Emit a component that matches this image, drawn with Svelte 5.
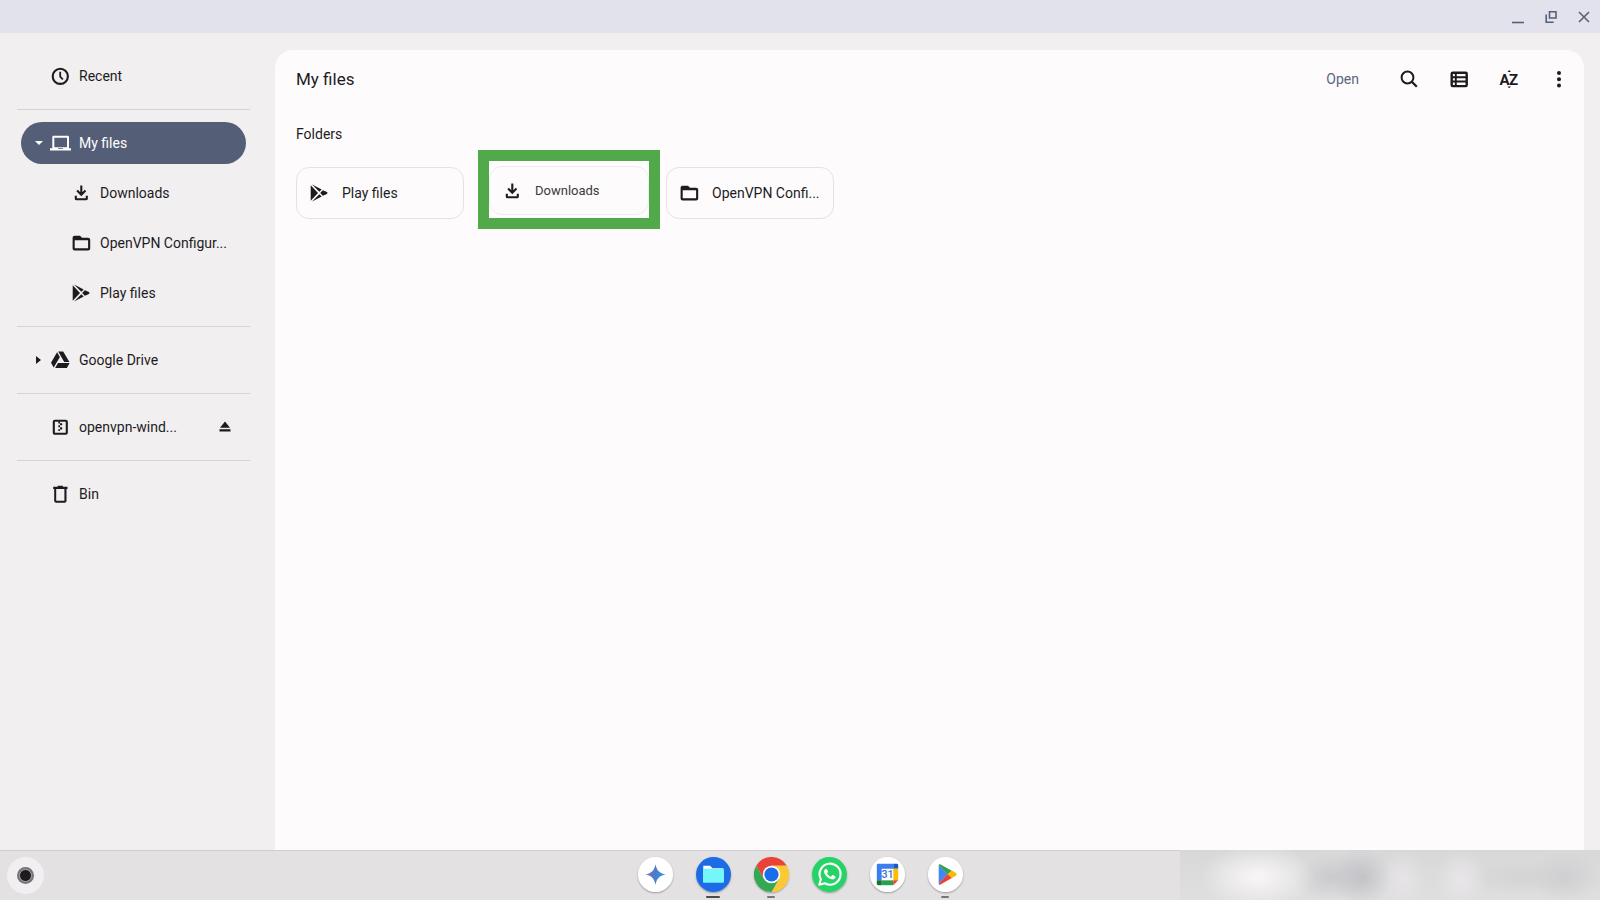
<script>
  const groups = [
    [{ label: 'Recent', icon: 'clock' }],
    [
      { label: 'My files', icon: 'laptop', arrow: 'down', selected: true },
      { label: 'Downloads', icon: 'download', child: true },
      { label: 'OpenVPN Configur...', icon: 'folder', child: true },
      { label: 'Play files', icon: 'play', child: true }
    ],
    [{ label: 'Google Drive', icon: 'drive', arrow: 'right' }],
    [{ label: 'openvpn-wind...', icon: 'archive', eject: true }],
    [{ label: 'Bin', icon: 'bin' }]
  ];
  const apps = [
    { name: 'Gemini', id: 'gemini' },
    { name: 'Files', id: 'files', state: 'active' },
    { name: 'Chrome', id: 'chrome', state: 'running' },
    { name: 'WhatsApp', id: 'whatsapp' },
    { name: 'Calendar', id: 'calendar' },
    { name: 'Play Store', id: 'store', state: 'running' }
  ];
</script>

{#snippet icon(name)}
  <svg class="icon" viewBox="0 0 20 20" width="20" height="20" aria-hidden="true">
    {#if name === 'clock'}
      <circle cx="10.300" cy="10.300" r="7.600" fill="none" stroke="currentColor" stroke-width="2.100" />
      <path d="M10.200 5.800v4.800l2.700 2.900" fill="none" stroke="currentColor" stroke-width="1.800" />
    {:else if name === 'laptop'}
      <path fill="currentColor" fill-rule="evenodd" d="M3.500 2.700h14.300c.7 0 1.200.5 1.200 1.200V15.300h2v2.200H0v-2.200h2.300V3.900c0-.7.5-1.200 1.200-1.200zM4.300 4.700v9.600H17V4.700zM8 15.300v.8h5v-.8z" />
    {:else if name === 'download'}
      <path d="M10.300 2.500v9M6.100 7.600l4.200 4.100 4.200-4.100M4.800 12.800v2.600c0 .5.300.900.800.900h9.400c.5 0 .8-.4.800-.9v-2.600" fill="none" stroke="currentColor" stroke-width="2.100" />
    {:else if name === 'folder'}
      <path fill="currentColor" fill-rule="evenodd" d="M3.600 2.800H9l2 2h6.200c1.100 0 2 .9 2 2v8.700c0 1.100-.9 2-2 2H3.600c-1.100 0-2-.9-2-2V4.800c0-1.100.9-2 2-2zM3.700 7.200v8.100h13.400V7.200z" />
    {:else if name === 'play'}
      <path fill="currentColor" d="M1.700 2.300v15.400L9 10zM3.100 1.600l7.200 7.200 2.400-2.300zM3.100 18.400l7.200-7.200 2.400 2.300z" />
      <path fill="currentColor" d="m13.800 7.200 3.600 1.600c1.500.7 1.500 1.700 0 2.400l-3.600 1.600L11.200 10z" />
    {:else if name === 'drive'}
      <path fill="currentColor" d="M7.100 2.200 1 12.700l2.700 4.900L9.900 6.900zM8.200 1.500h5l6.200 10.600h-5.200zM8 12.900h11.600l-2.700 5H5.100z" />
    {:else if name === 'archive'}
      <rect x="3.800" y="3.700" width="13" height="13" rx="1" fill="none" stroke="currentColor" stroke-width="2.100" />
      <path fill="currentColor" d="M8.300 4.500H10v2H8.300zM10 6.300h2.200v2H10zM8.300 8.300H10v2H8.300zM10 10.300h2.200v2.200H10zM8.300 12.200H10V14H8.300z" />
    {:else if name === 'bin'}
      <path fill="currentColor" fill-rule="evenodd" d="M7.700 1.800h5.200v1h4.600V5h-1v11.800c0 1.100-.9 2-2 2H6.200c-1.100 0-2-.9-2-2V5h-1V2.800h4.500zM6.200 5v11.700h8.200V5z" />
    {:else if name === 'search'}
      <circle cx="8.500" cy="8.500" r="5.900" fill="none" stroke="currentColor" stroke-width="2" />
      <path d="m12.800 12.800 5 5" stroke="currentColor" stroke-width="2.300" />
    {:else if name === 'list'}
      <rect x="2.700" y="3.700" width="15" height="13.400" rx="1" fill="none" stroke="currentColor" stroke-width="2.400" />
      <path d="M2 8.200h16M2 12.600h16" stroke="currentColor" stroke-width="2" />
      <path d="M6.800 3v14" stroke="currentColor" stroke-width="1.900" />
    {:else if name === 'sort'}
      <text x="0.500" y="15.700" class="sort-text">A</text>
      <text x="9.900" y="15.700" class="sort-text">Z</text>
      <path fill="currentColor" d="M8.500 2.900 10.200 1.100l1.700 1.800zM8.500 17.400l1.700 1.800 1.700-1.800z" />
    {:else if name === 'more'}
      <circle cx="10" cy="4" r="2" fill="currentColor" />
      <circle cx="10" cy="10.300" r="2" fill="currentColor" />
      <circle cx="10" cy="16.600" r="2" fill="currentColor" />
    {/if}
  </svg>
{/snippet}

{#snippet appIcon(id)}
  <svg viewBox="0 0 36 36" aria-hidden="true">
    {#if id === 'gemini'}
      <defs>
        <linearGradient id="spark" x1="0" x2="1" y1="0.400" y2="0.600">
          <stop offset="0" stop-color="#8a72bd" /><stop offset="0.450" stop-color="#4c7bc8" /><stop offset="1" stop-color="#2b9ae8" />
        </linearGradient>
      </defs>
      <circle cx="18" cy="18" r="18" fill="#fff" />
      <path fill="url(#spark)" d="M18 7.500C19.300 14 22 16.700 28.500 18 22 19.300 19.300 22 18 28.500 16.700 22 14 19.300 7.500 18 14 16.700 16.700 14 18 7.500z" />
    {:else if id === 'files'}
      <circle cx="18" cy="18" r="18" fill="#1b6ce5" />
      <path fill="#fff" d="M7.500 9h7l2.500 2.500h11V20H7.500z" />
      <path fill="#75f7fa" d="M7.500 12h20c.8 0 1.300.5 1.300 1.300v12c0 .8-.5 1.300-1.300 1.300h-19c-.8 0-1.300-.5-1.300-1.300v-13z" />
    {:else if id === 'chrome'}
      <path fill="#ea4335" d="M2.400 9A18 18 0 0 1 33.600 9H18L10.200 22.500z" />
      <path fill="#fbc934" d="M33.600 9A18 18 0 0 1 18 36l7.800-13.500L18 9z" />
      <path fill="#34a853" d="M18 36A18 18 0 0 1 2.400 9l7.800 13.500h15.600z" />
      <circle cx="18" cy="18" r="9" fill="#fff" />
      <circle cx="18" cy="18" r="7.300" fill="#1a6fe8" />
    {:else if id === 'whatsapp'}
      <circle cx="18" cy="18" r="18" fill="#25d366" />
      <path d="m7.500 28.500 1.600-5.700A10.800 10.800 0 1 1 13.200 27z" fill="none" stroke="#fff" stroke-width="2.200" stroke-linejoin="round" />
      <path fill="#fff" d="M13.500 12.500c.6-.7 1.500-.7 1.900 0l1 2.200c.2.500 0 .9-.9 1.900.8 1.700 2.100 2.900 3.900 3.600l1.200-1.400c.3-.4.7-.4 1.100-.2l2.100 1.100c.5.300.5.600.4 1.100-.4 1.800-2.300 2.600-4.100 2.100-3.900-.9-6.500-3.400-7.700-6.900-.4-1.300.1-2.700 1.100-3.500z" />
    {:else if id === 'calendar'}
      <circle cx="18" cy="18" r="18" fill="#fff" />
      <path fill="#3c7df0" d="M8.500 7H24v5H12v12H7V8.500C7 7.600 7.600 7 8.500 7z" />
      <path fill="#1957c5" d="M24 7h3.500c.9 0 1.500.6 1.500 1.500V12h-5z" />
      <path fill="#fbbc04" d="M24 12h5v12h-5z" />
      <path fill="#2b9f4b" d="M12 24h12v5H12z" />
      <path fill="#137333" d="M7 24h5v5H8.500C7.600 29 7 28.400 7 27.500z" />
      <path fill="#ea4335" d="M24 24h5l-5 5z" />
      <text x="18" y="21.500" class="date">31</text>
    {:else}
      <circle cx="18" cy="18" r="18" fill="#fff" />
      <path fill="#4285f4" d="M11 8.500v19l9-9.500z" />
      <path fill="#34a05a" d="M11 8.500c0-1 1-1.400 2-.9l11.500 6.500L20 18.200z" />
      <path fill="#fbbc04" d="m24.500 14 4 2.300c1.300.8 1.300 2.200 0 3l-4 2.300-4.700-3.700z" />
      <path fill="#ea4335" d="M11 27.500c0 1 1 1.400 2 .9l11.500-6.700-4.500-4z" />
    {/if}
  </svg>
{/snippet}

<div class="window">
  <header class="titlebar">
    <button aria-label="Minimise"><svg viewBox="0 0 14 14" width="14" height="14"><path d="M1 12.500h12" /></svg></button>
    <button aria-label="Restore"><svg viewBox="0 0 14 14" width="14" height="14"><path d="M5.500 1.800h6.500v6.200H5.500zM2.200 4.500v7.700h7.500" /></svg></button>
    <button aria-label="Close"><svg viewBox="0 0 14 14" width="14" height="14"><path d="m2 2 10 10M12 2 2 12" /></svg></button>
  </header>

  <div class="body">
    <nav class="sidebar" aria-label="Locations">
      {#each groups as group}
        <ul>
          {#each group as item}
            <li class:selected={item.selected} class:child={item.child}>
              <button class="row">
                <span class="arrow {item.arrow ?? ''}"></span>
                {@render icon(item.icon)}
                <span>{item.label}</span>
              </button>
              {#if item.eject}
                <button class="eject" aria-label="Eject">
                  <svg viewBox="0 0 12 12" width="12" height="12"><path fill="currentColor" d="m6 .500 5 6.300H1zM.500 8.300h11v2.200H.500z" /></svg>
                </button>
              {/if}
            </li>
          {/each}
        </ul>
      {/each}
    </nav>

    <main>
      <div class="toolbar">
        <h1>My files</h1>
        <button class="open">Open</button>
        <button class="tool" aria-label="Search">{@render icon('search')}</button>
        <button class="tool" aria-label="List view">{@render icon('list')}</button>
        <button class="tool" aria-label="Sort">{@render icon('sort')}</button>
        <button class="tool" aria-label="More">{@render icon('more')}</button>
      </div>
      <h2>Folders</h2>
      <div class="cards">
        <button class="card">{@render icon('play')}<span>Play files</span></button>
        <div class="cell">
          <div class="highlight">
            <button class="card">{@render icon('download')}<span>Downloads</span></button>
          </div>
        </div>
        <button class="card">{@render icon('folder')}<span>OpenVPN Confi...</span></button>
      </div>
    </main>
  </div>

  <footer class="shelf">
    <div class="side"><button class="launcher" aria-label="Launcher"><span></span></button></div>
    <div class="apps">
      {#each apps as app}
        <button class="app {app.state ?? ''}" aria-label={app.name}>{@render appIcon(app.id)}</button>
      {/each}
    </div>
    <div class="side end"><div class="tray"></div></div>
  </footer>
</div>

<style>
  :global(body) { margin: 0; }
  .window {
    display: flex;
    flex-direction: column;
    min-height: 100vh;
    background: #f1eff0;
    color: #1d1b1e;
    font: 450 14px/20px Roboto, sans-serif;
  }
  button {
    display: flex;
    align-items: center;
    margin: 0;
    padding: 0;
    border: 0;
    background: none;
    color: inherit;
    font: inherit;
    cursor: pointer;
  }
  .icon { flex: none; overflow: visible; }
  h1, h2, ul { margin: 0; padding: 0; }

  .titlebar {
    display: flex;
    justify-content: flex-end;
    gap: 9px;
    height: 33px;
    padding-right: 4px;
    background: #e1e2ec;
    color: #566079;
  }
  .titlebar button { width: 24px; justify-content: center; }
  .titlebar path { fill: none; stroke: currentColor; stroke-width: 1.6; }

  .body { display: flex; flex: 1; padding-right: 16px; }
  .sidebar { flex: none; width: 233px; padding: 10px 25px 0 17px; }
  ul { display: grid; gap: 8px; padding: 12px 4px; list-style: none; }
  ul + ul { border-top: 1px solid #d5d3d5; }
  li { display: flex; align-items: center; height: 42px; border-radius: 21px; }
  .row { flex: 1; height: 42px; padding-left: 15px; white-space: nowrap; }
  .row .icon { margin: 0 9px; }
  .child .row { padding-left: 36px; }
  .selected { background: #545e77; color: #fff; }
  .arrow { width: 5px; display: flex; justify-content: center; }
  .arrow.down::before { content: ''; flex: none; border: 4px solid transparent; border-top-color: currentColor; border-bottom: 0; }
  .arrow.right::before { content: ''; border: 4px solid transparent; border-left: 5px solid currentColor; border-right: 0; }
  .eject { padding: 4px; margin-right: 11px; }

  main {
    flex: 1;
    margin-top: 17px;
    padding: 8px 8px 24px 21px;
    background: #fefbfd;
    border-radius: 18px 18px 0 0;
  }
  .toolbar { display: flex; align-items: center; gap: 16px; height: 42px; }
  h1 { flex: 1; font-size: 17px; line-height: 24px; font-weight: 450; }
  h2 { margin-top: 24px; font-size: 14px; line-height: 20px; font-weight: 450; }
  .open { margin-right: 17px; color: #5b647c; }
  .tool { width: 34px; height: 34px; justify-content: center; }
  .sort-text { font: 700 15px Roboto, sans-serif; fill: currentColor; }

  .cards { display: flex; gap: 17px; margin-top: 23px; }
  .card {
    box-sizing: border-box;
    width: 168px;
    height: 52px;
    gap: 13px;
    padding-left: 12px;
    border: 1px solid #e5e2e6;
    border-radius: 13px;
    font-weight: 400;
    white-space: nowrap;
  }
  .cell { position: relative; width: 168px; }
  .highlight {
    position: absolute;
    top: -17px;
    left: -3px;
    padding: 5px 0 3px;
    border: 11px solid #52a94a;
    background: #fefefe;
  }
  .highlight .card {
    width: 160px;
    height: 49px;
    background: #fefbfd;
    border-color: #efecef;
    font-size: 13px;
    color: #3b393c;
  }
  .highlight .icon { color: #1d1b1e; }

  .shelf {
    display: flex;
    align-items: stretch;
    height: 49px;
    border-top: 1px solid #cfcdcf;
    background: #e3e1e2;
  }
  .side { display: flex; flex: 1; align-items: center; }
  .end { justify-content: flex-end; }
  .launcher { width: 37px; height: 37px; margin-left: 7px; justify-content: center; border-radius: 50%; background: #f1eff1; }
  .launcher span {
    width: 11px;
    height: 11px;
    border: 1px solid #a9a7aa;
    border-radius: 50%;
    background: #1c1b1d;
    box-shadow: 0 0 0 2px #767478;
  }
  .apps { display: flex; gap: 23px; padding-top: 6px; }
  .app { position: relative; width: 35px; height: 35px; border-radius: 50%; box-shadow: 0 1px 2px #0005; }
  .app svg { width: 35px; height: 35px; }
  .active::after, .running::after {
    content: '';
    position: absolute;
    top: 39px;
    left: 50%;
    width: 8px;
    height: 2px;
    border-radius: 1px;
    background: #777578;
    transform: translateX(-50%);
  }
  .active::after { width: 14px; background: #4b494c; }
  .date { font: 500 11px Roboto, sans-serif; fill: #3c73dc; text-anchor: middle; }
  .tray {
    width: 420px;
    max-width: 100%;
    align-self: stretch;
    margin-top: -1px;
    background:
      radial-gradient(ellipse 58px 32px at 78px 27px, #f6f4f5 10%, #f6f4f500),
      radial-gradient(ellipse 30px 30px at 182px 27px, #c3c2c7, #c3c2c700),
      radial-gradient(ellipse 40px 24px at 152px 27px, #cac9cc, #cac9cc00),
      radial-gradient(ellipse 24px 28px at 223px 29px, #e6e4e6, #e6e4e600),
      radial-gradient(ellipse 26px 28px at 281px 29px, #e8e6e8, #e8e6e800),
      radial-gradient(ellipse 36px 26px at 385px 27px, #cfced0, #cfced000),
      radial-gradient(ellipse 60px 18px at 340px 27px, #d5d4d5, #d5d4d500),
      linear-gradient(#d9d8d9, #e0dfe0);
  }
</style>
